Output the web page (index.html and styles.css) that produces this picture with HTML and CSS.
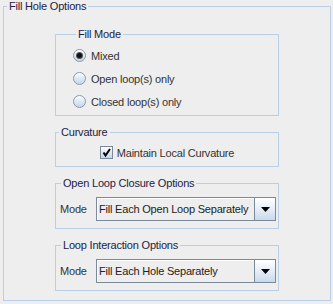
FILE: index.html
```html
<!DOCTYPE html>
<html lang="en">
<head>
    <meta charset="UTF-8">
    <title>Fill Hole Options</title>
    <link rel="stylesheet" href="styles.css">
</head>
<body>
    <fieldset class="panel">
        <legend>Fill Hole Options</legend>
        <div class="groups">
            <fieldset class="group fill-mode">
                <legend>Fill Mode</legend>
                <label class="radio"><span class="radio-dot checked"></span>Mixed</label>
                <label class="radio"><span class="radio-dot"></span>Open loop(s) only</label>
                <label class="radio"><span class="radio-dot"></span>Closed loop(s) only</label>
            </fieldset>

            <fieldset class="group curvature">
                <legend>Curvature</legend>
                <label class="check">
                    <span class="check-box">
                        <svg width="11" height="11" viewBox="0 0 11 11"><path d="M2.5 5.5 L4.5 8.5 L9 2" fill="none" stroke="#000" stroke-width="2"/></svg>
                    </span>
                    Maintain Local Curvature
                </label>
            </fieldset>

            <fieldset class="group mode-group">
                <legend>Open Loop Closure Options</legend>
                <div class="mode-row">
                    <span class="mode-label">Mode</span>
                    <div class="combo">
                        <span class="combo-value">Fill Each Open Loop Separately</span>
                        <span class="combo-arrow"><svg width="9" height="5" viewBox="0 0 9 5"><polygon points="0,0 9,0 4.5,5" fill="#000"/></svg></span>
                    </div>
                </div>
            </fieldset>

            <fieldset class="group mode-group">
                <legend>Loop Interaction Options</legend>
                <div class="mode-row">
                    <span class="mode-label">Mode</span>
                    <div class="combo">
                        <span class="combo-value">Fill Each Hole Separately</span>
                        <span class="combo-arrow"><svg width="9" height="5" viewBox="0 0 9 5"><polygon points="0,0 9,0 4.5,5" fill="#000"/></svg></span>
                    </div>
                </div>
            </fieldset>
        </div>
    </fieldset>
</body>
</html>
```

FILE: styles.css
```css
body {
    margin: 0;
    padding: 0 2px 3px 3px;
    background-color: #eeeeee;
    font-family: 'Liberation Sans', Arial, sans-serif;
    font-size: 11px;
    letter-spacing: -0.2px;
    color: #333333;
}

fieldset {
    margin: 0;
    min-width: 0;
    border: 1px solid #b8cfe5;
}

legend {
    margin-left: 3px;
    padding: 0 2px;
    line-height: 13px;
    color: #222244;
}

.panel {
    padding: 15px 0 9px;
}

.groups {
    display: flex;
    flex-direction: column;
    align-items: center;
    gap: 10px;
}

.group {
    width: 224px;
    box-sizing: border-box;
}

/* Fill Mode radios */
.fill-mode {
    padding: 3px 0 2px 17px;
}

.radio {
    display: flex;
    align-items: center;
    height: 23px;
    gap: 5px;
}

.radio-dot {
    width: 11px;
    height: 11px;
    border: 1px solid #8a9aab;
    border-radius: 50%;
    background: linear-gradient(#ffffff, #dde8f3 50%, #c6d6e8);
    display: flex;
    align-items: center;
    justify-content: center;
}

.radio-dot.checked::after {
    content: "";
    width: 5px;
    height: 5px;
    border-radius: 50%;
    background-color: #111111;
    box-shadow: 0 0 0 1px #555555;
}

/* Curvature checkbox */
.curvature {
    padding: 7px 0;
}

.check {
    display: flex;
    align-items: center;
    justify-content: center;
    gap: 4px;
    height: 13px;
}

.check-box {
    width: 11px;
    height: 11px;
    border: 1px solid #7a8a99;
    background: linear-gradient(#ffffff, #dde8f3 50%, #c6d6e8);
    display: flex;
}

/* Mode combos */
.mode-group {
    padding: 7px 2px;
}

.mode-row {
    display: flex;
    align-items: center;
}

.mode-label {
    padding-left: 2px;
}

.combo {
    margin-left: auto;
    width: 180px;
    height: 24px;
    box-sizing: border-box;
    border: 1px solid #7a8a99;
    box-shadow: inset 1px 1px 0 #ffffff;
    background-color: #eeeeee;
    display: flex;
    align-items: center;
}

.combo-value {
    flex: 1;
    padding-left: 2px;
    color: #222222;
}

.combo-arrow {
    width: 20px;
    height: 100%;
    border-left: 1px solid #7a8a99;
    background: linear-gradient(#ffffff, #e6eef7 50%, #c9d9ea);
    display: flex;
    align-items: center;
    justify-content: center;
}
```
